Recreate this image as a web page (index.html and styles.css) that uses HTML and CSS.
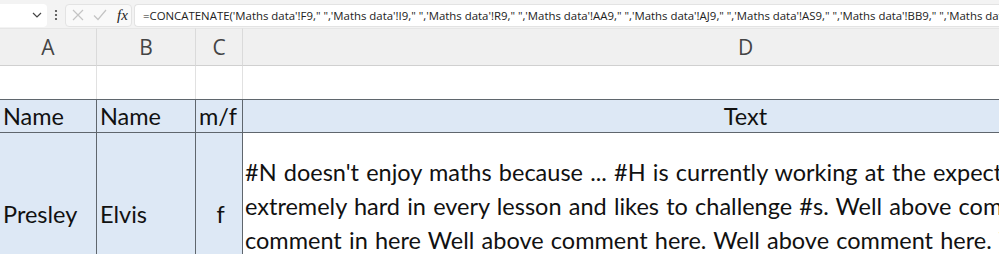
FILE: index.html
```html
<!DOCTYPE html>
<html>
<head>
<meta charset="utf-8">
<link rel="stylesheet" href="styles.css">
</head>
<body>
<div class="app">
  <div class="fbar">
    <div class="namebox">
      <svg class="chev" width="10" height="6" viewBox="0 0 10 6"><path d="M1 1 L5 5 L9 1" fill="none" stroke="#444" stroke-width="1.2"/></svg>
    </div>
    <div class="dots">
      <svg width="4" height="12" viewBox="0 0 4 12"><circle cx="2" cy="2" r="1.1" fill="#444"/><circle cx="2" cy="6" r="1.1" fill="#444"/><circle cx="2" cy="10" r="1.1" fill="#444"/></svg>
    </div>
    <div class="fbtns">
      <svg class="ic" width="12" height="12" viewBox="0 0 12 12"><path d="M1 1 L11 11 M11 1 L1 11" stroke="#c4c4c4" stroke-width="1.2" fill="none"/></svg>
      <svg class="ic" width="14" height="12" viewBox="0 0 14 12"><path d="M1 6.5 L5 10.5 L13 1" stroke="#c4c4c4" stroke-width="1.2" fill="none"/></svg>
      <span class="fx">fx</span>
    </div>
    <div class="formula">=CONCATENATE('Maths data'!F9," ",'Maths data'!I9," ",'Maths data'!R9," ",'Maths data'!AA9," ",'Maths data'!AJ9," ",'Maths data'!AS9," ",'Maths data'!BB9," ",'Maths data'!BK9," ",'Maths data'!BT9)</div>
  </div>
  <div class="sheet">
    <div class="ch">A</div>
    <div class="ch">B</div>
    <div class="ch">C</div>
    <div class="ch">D</div>

    <div class="c"></div>
    <div class="c"></div>
    <div class="c"></div>
    <div class="c"></div>

    <div class="c hd">Name</div>
    <div class="c hd">Name</div>
    <div class="c hd">m/f</div>
    <div class="c hd center">Text</div>

    <div class="c bl mid">Presley</div>
    <div class="c bl mid">Elvis</div>
    <div class="c bl mid center">f</div>
    <div class="c txt">#N doesn't enjoy maths because ... #H is currently working at the expected level. #H works<br>extremely hard in every lesson and likes to challenge #s. Well above comment here Well above<br>comment in here Well above comment here. Well above comment here. Well above comment here.</div>
  </div>
</div>
</body>
</html>
```
FILE: styles.css
```css
* { box-sizing: border-box; }
html, body { margin: 0; padding: 0; }
body { width: 999px; height: 254px; overflow: hidden; background: #fff; }
.app { width: 999px; overflow: hidden; }

.fbar {
  height: 28px;
  background: #f3f3f3;
  display: flex;
  align-items: center;
  padding: 3px 0 1px 0;
}
.namebox {
  width: 47px;
  height: 23px;
  background: #fff;
  border-radius: 0 4px 4px 0;
  display: flex;
  align-items: center;
  justify-content: flex-end;
  padding-right: 5px;
}
.dots { width: 18px; display: flex; justify-content: center; align-items: center; }
.fbtns {
  width: 67px;
  height: 23px;
  background: #f9f9f9;
  border: 1px solid #e3e3e3;
  border-radius: 4px;
  display: flex;
  align-items: center;
  gap: 9px;
  padding-left: 6px;
}
.fx {
  font-family: "Liberation Serif", serif;
  font-style: italic;
  font-size: 15px;
  color: #222;
  margin-left: 1px;
}
.formula {
  flex: 1;
  margin-left: 2px;
  height: 23px;
  background: #fff;
  border: 1px solid #e3e3e3;
  border-right: none;
  border-radius: 4px 0 0 4px;
  font-family: "Open Sans", sans-serif;
  font-size: 11.4px;
  line-height: 21px;
  color: #222;
  padding-left: 8px;
  white-space: nowrap;
  overflow: hidden;
}

.sheet {
  display: grid;
  width: 1249px;
  grid-template-columns: 97px 99px 47px 1006px;
  grid-template-rows: 38px 34px 33px 200px;
  font-family: "Lato", sans-serif;
}
.ch {
  background: #f0f0f0;
  border-right: 1px solid #dadada;
  border-bottom: 1px solid #d0d0d0;
  border-top: 1px solid #e6e6e6;
  font-family: "Open Sans", sans-serif;
  font-size: 21px;
  color: #444;
  display: flex;
  align-items: center;
  justify-content: center;
}
.c {
  border-right: 1px solid #e1e1e1;
  border-bottom: 1px solid #e1e1e1;
  font-size: 23.5px;
  color: #111;
  white-space: nowrap;
  overflow: hidden;
}
.hd {
  background: #dde8f5;
  border-top: 1px solid #5f666d;
  border-right: 1px solid #5f666d;
  border-bottom: 1px solid #5f666d;
  margin-top: -1px;
  padding-left: 3px;
  line-height: 32px;
}
.center { text-align: center; padding-left: 0; }
.bl {
  background: #dde8f5;
  border-right: 1px solid #5f666d;
  padding-left: 3px;
}
.mid { padding-top: 64px; line-height: 34px; }
.txt {
  padding: 22px 0 0 2px;
  line-height: 34px;
  word-spacing: 1.2px;
}
```
